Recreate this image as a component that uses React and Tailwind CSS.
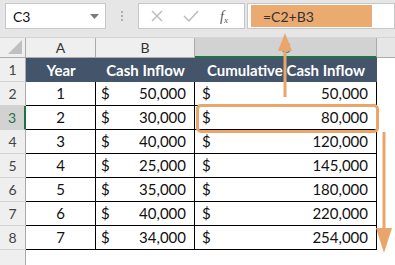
import React from "react";

const rows = [
  { n: 1, b: "50,000", c: "50,000" },
  { n: 2, b: "30,000", c: "80,000" },
  { n: 3, b: "40,000", c: "120,000" },
  { n: 4, b: "25,000", c: "145,000" },
  { n: 5, b: "35,000", c: "180,000" },
  { n: 6, b: "40,000", c: "220,000" },
  { n: 7, b: "34,000", c: "254,000" },
];

function RowHead({ label, active }) {
  return (
    <div
      className={
        "w-[26px] h-full flex items-center justify-center text-[14px] border-b border-[#d4d4d4] " +
        (active
          ? "bg-[#d2d2d2] text-[#217346] border-r-2 border-r-[#217346]"
          : "bg-[#efefef] text-[#444] border-r border-r-[#ababab]")
      }
    >
      {label}
    </div>
  );
}

export default function App() {
  return (
    <div
      className="relative w-[395px] h-[265px] overflow-hidden bg-white text-[#111]"
      style={{ fontFamily: "Lato, 'Liberation Sans', sans-serif" }}
    >
      {/* Formula bar */}
      <div className="h-[38px] bg-[#e6e6e6] flex items-start pt-[3px] border-b border-[#d4d4d4]">
        <div className="ml-[5px] w-[101px] h-[26px] bg-white border border-[#c6c6c6] flex items-center justify-between pl-[7px] pr-[6px] text-[14px]">
          <span>C3</span>
          <svg width="9" height="5" viewBox="0 0 9 5">
            <path d="M0 0h9L4.5 5z" fill="#7a7a7a" />
          </svg>
        </div>
        <div className="w-[32px] h-[26px] flex flex-col items-center justify-center gap-[2px]">
          <span className="w-[2px] h-[2px] bg-[#b0b0b0]" />
          <span className="w-[2px] h-[2px] bg-[#b0b0b0]" />
          <span className="w-[2px] h-[2px] bg-[#b0b0b0]" />
        </div>
        <div className="w-[107px] h-[26px] bg-white border border-[#c6c6c6] flex items-center">
          <svg width="14" height="14" viewBox="0 0 14 14" className="ml-[11px]">
            <path d="M2 2l10 10M12 2L2 12" stroke="#b9b9b9" strokeWidth="1.4" />
          </svg>
          <svg width="16" height="14" viewBox="0 0 16 14" className="ml-[19px]">
            <path d="M1 7l5 5L15 2" stroke="#b9b9b9" strokeWidth="1.4" fill="none" />
          </svg>
          <span
            className="ml-[21px] text-[14px] italic text-[#555]"
            style={{ fontFamily: "'Liberation Serif', serif" }}
          >
            f<sub className="text-[9px]">x</sub>
          </span>
        </div>
        <div className="ml-[2px] flex-1 h-[26px] bg-white border border-[#c6c6c6] pt-[1px] pl-[3px]">
          <div className="w-[121px] h-[22px] bg-[#ebaa70] flex items-center pl-[12px] text-[14px] text-[#333]">
            =C2+B3
          </div>
        </div>
      </div>

      {/* Column headers */}
      <div className="flex h-[20px] bg-[#e6e6e6]">
        <div className="w-[26px] h-full bg-[#efefef] border-r border-b border-[#ababab] relative">
          <svg width="14" height="14" viewBox="0 0 14 14" className="absolute right-[3px] bottom-[3px]">
            <path d="M14 0v14H0z" fill="#c0c0c0" />
          </svg>
        </div>
        <div className="w-[70px] h-full bg-[#efefef] border-r border-b border-[#ababab] flex items-center justify-center text-[14px] text-[#333]">
          A
        </div>
        <div className="w-[99px] h-full bg-[#efefef] border-r border-b border-[#ababab] flex items-center justify-center text-[14px] text-[#333]">
          B
        </div>
        <div className="w-[182px] h-full bg-[#d2d2d2] border-r border-r-[#ababab] border-b-2 border-b-[#217346] flex items-center justify-center text-[14px] text-[#217346]">
          C
        </div>
        <div className="flex-1 h-full bg-[#e6e6e6] border-b border-[#ababab]" />
      </div>

      {/* Header row */}
      <div className="flex h-[24px]">
        <RowHead label="1" />
        <div className="w-[351px] h-full flex bg-[#44546a] text-white font-bold text-[15px]">
          <div className="w-[70px] flex items-center justify-center">Year</div>
          <div className="w-[99px] flex items-center justify-center">Cash Inflow</div>
          <div className="flex-1 flex items-center justify-center">Cumulative Cash Inflow</div>
        </div>
      </div>

      {/* Data rows */}
      {rows.map((r, i) => (
        <div key={r.n} className="flex h-[24px]">
          <RowHead label={String(i + 2)} active={i === 1} />
          <div className="w-[351px] h-full flex border-b border-black text-[15px]">
            <div className="w-[70px] border-r border-black flex items-center justify-center">{r.n}</div>
            <div className="w-[99px] border-r border-black flex items-center justify-between pl-[5px] pr-[8px]">
              <span>$</span>
              <span>{r.b}</span>
            </div>
            <div className="flex-1 border-r border-black flex items-center justify-between pl-[7px] pr-[8px]">
              <span>$</span>
              <span>{r.c}</span>
            </div>
          </div>
        </div>
      ))}

      {/* Empty row */}
      <div className="flex h-[16px]">
        <div className="w-[26px] h-full bg-[#efefef] border-r border-[#ababab]" />
      </div>

      {/* Selected cell highlight */}
      <div className="absolute left-[196px] top-[104px] w-[183px] h-[29px] border-[3px] border-[#e9a56a] rounded-[5px]" />

      {/* Arrows */}
      <svg className="absolute left-0 top-0" width="395" height="265" viewBox="0 0 395 265">
        <path d="M285 97V48" stroke="#e9a56a" strokeWidth="3" />
        <path d="M285 33l-7 18h14z" fill="#e9a56a" />
        <path d="M384 132v98" stroke="#e9a56a" strokeWidth="3" />
        <path d="M376 228h16l-8 25z" fill="#e9a56a" />
      </svg>
    </div>
  );
}
